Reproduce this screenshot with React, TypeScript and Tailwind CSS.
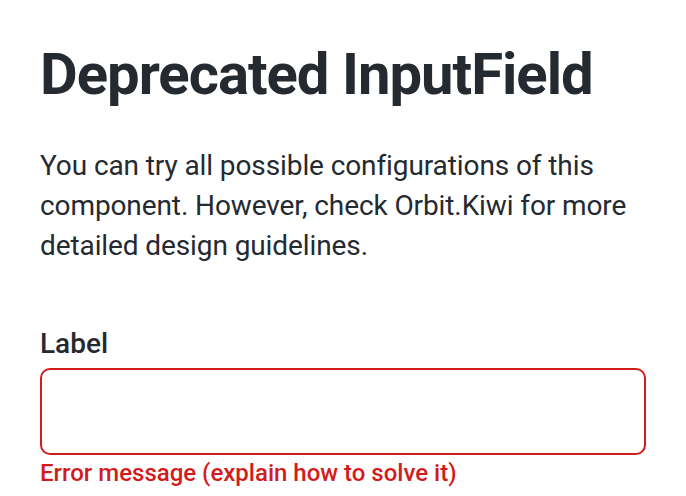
import React from "react";

const App: React.FC = () => {
  return (
    <div className="w-[686px] h-[496px] overflow-hidden bg-white px-10 pt-[38px] font-['Roboto',sans-serif] text-[#252a31]">
      <h1 className="text-[58px] font-bold leading-[72px] tracking-[-1px]">Deprecated InputField</h1>
      <p className="mt-[36px] text-[28px] leading-[40px] tracking-[-0.1px]">
        You can try all possible configurations of this component. However, check Orbit.Kiwi for more
        detailed design guidelines.
      </p>
      <label className="mt-[60px] block">
        <span className="block text-[28px] font-medium leading-[36px]">Label</span>
        <div className="mt-[6px] h-[87px] w-[606px] rounded-[10px] border-2 border-[#d21c1c]">
          <input className="h-full w-full bg-transparent px-4 text-[26px] outline-none" />
        </div>
      </label>
      <div className="mt-[1px] text-[24px] font-medium leading-[34px] text-[#d21c1c]">
        Error message (explain how to solve it)
      </div>
    </div>
  );
};

export default App;
